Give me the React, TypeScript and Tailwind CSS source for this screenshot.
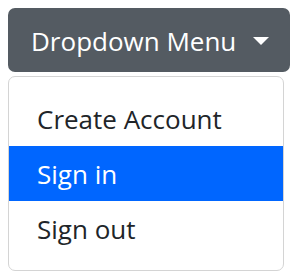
const ITEMS = [
  { label: "Create Account", active: false },
  { label: "Sign in", active: true },
  { label: "Sign out", active: false },
];

export default function App() {
  return (
    <div
      className="h-[280px] w-[296px] bg-white pl-2 pt-2"
      style={{ fontFamily: '"Open Sans", "Noto Sans", sans-serif' }}
    >
      <button className="flex h-[64px] w-[282px] items-center rounded-[7px] bg-[#545b62] pl-[23px] pt-[2px] text-[26px] text-white">
        Dropdown Menu
        <span className="ml-[17px] h-0 w-0 border-x-[8px] border-t-[8px] border-x-transparent border-t-white" />
      </button>
      <div className="mt-[4px] w-[276px] rounded-[7px] border border-[#d4d4d4] bg-white py-[14px]">
        {ITEMS.map((it) => (
          <div
            key={it.label}
            className={`flex h-[55px] items-center pl-[28px] pt-[2px] text-[26px] ${
              it.active ? "bg-[#0066ff] text-white" : "text-[#212529]"
            }`}
          >
            {it.label}
          </div>
        ))}
      </div>
    </div>
  );
}
